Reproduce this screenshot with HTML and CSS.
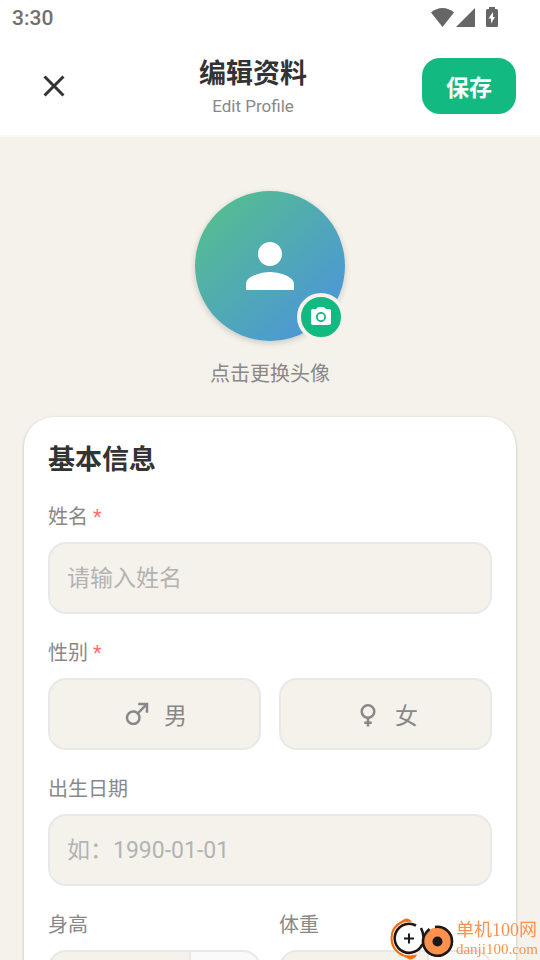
FILE: index.html
```html
<!DOCTYPE html>
<html lang="zh-CN">
<head>
<meta charset="utf-8">
<meta name="viewport" content="width=device-width, initial-scale=1">
<title>编辑资料</title>
<link rel="stylesheet" href="styles.css">
</head>
<body>
<div class="app">
  <div class="status">
    <span class="status-time">3:30</span>
    <svg class="status-icons" width="70" height="24" viewBox="0 0 70 24" fill="#666" aria-hidden="true">
      <path d="M12.500 23 1 8.500C7.500 2.500 17.500 2.500 24 8.500Z"/>
      <path d="M26 23 45 4V23Z"/>
      <path fill-rule="evenodd" d="M59 3h6v2h1.500q1.500 0 1.500 1.500v15q0 1.500-1.500 1.500h-9q-1.500 0-1.500-1.500v-15q0-1.500 1.500-1.500h1.500ZM63 8l-4.500 6.500h2.500v5l4-6.500h-2Z"/>
    </svg>
  </div>

  <header class="header">
    <button class="close" type="button" aria-label="关闭">
      <svg width="36" height="36" viewBox="0 0 24 24" fill="#333" aria-hidden="true"><path d="M19 6.410 17.590 5 12 10.590 6.410 5 5 6.410 10.590 12 5 17.590 6.410 19 12 13.410 17.590 19 19 17.590 13.410 12z"/></svg>
    </button>
    <div class="heading">
      <h1 class="heading-title">编辑资料</h1>
      <p class="heading-sub">Edit Profile</p>
    </div>
    <button class="save" type="submit" form="profile">保存</button>
  </header>

  <main class="content">
    <section class="avatar-section">
      <button class="avatar" type="button" aria-label="更换头像">
        <svg width="72" height="72" viewBox="0 0 24 24" fill="#fff" aria-hidden="true"><path d="M12 12c2.210 0 4-1.790 4-4s-1.790-4-4-4-4 1.790-4 4 1.790 4 4 4zm0 2c-2.670 0-8 1.340-8 4v2h16v-2c0-2.660-5.330-4-8-4z"/></svg>
        <span class="avatar-badge">
          <svg width="24" height="24" viewBox="0 0 24 24" fill="#fff" aria-hidden="true"><circle cx="12" cy="12" r="3.200"/><path d="M9 2 7.170 4H4c-1.100 0-2 .9-2 2v12c0 1.100.9 2 2 2h16c1.100 0 2-.9 2-2V6c0-1.100-.9-2-2-2h-3.170L15 2H9zm3 15c-2.760 0-5-2.240-5-5s2.240-5 5-5 5 2.240 5 5-2.240 5-5 5z"/></svg>
        </span>
      </button>
      <p class="avatar-hint">点击更换头像</p>
    </section>

    <form class="card" id="profile">
      <h2 class="card-title">基本信息</h2>

      <div class="field">
        <label class="label" for="name">姓名 <span class="required">*</span></label>
        <input class="input" id="name" type="text" placeholder="请输入姓名">
      </div>

      <div class="field" role="radiogroup" aria-labelledby="gender-label">
        <span class="label" id="gender-label">性别 <span class="required">*</span></span>
        <div class="row">
          <label class="choice">
            <input class="choice-input" type="radio" name="gender" value="male">
            <svg width="30" height="30" viewBox="0 0 24 24" fill="currentColor" aria-hidden="true"><path d="M9 9C10.290 9 11.500 9.410 12.470 10.110L17.580 5H13V3H21V11H19V6.410L13.890 11.500C14.590 12.500 15 13.700 15 15A6 6 0 0 1 9 21A6 6 0 0 1 3 15A6 6 0 0 1 9 9M9 11A4 4 0 0 0 5 15A4 4 0 0 0 9 19A4 4 0 0 0 13 15A4 4 0 0 0 9 11Z"/></svg>
            <span>男</span>
          </label>
          <label class="choice">
            <input class="choice-input" type="radio" name="gender" value="female">
            <svg width="30" height="30" viewBox="0 0 24 24" fill="currentColor" aria-hidden="true"><path d="M12 4A6 6 0 0 1 18 10C18 12.970 15.840 15.440 13 15.920V18H15V20H13V22H11V20H9V18H11V15.920C8.160 15.440 6 12.970 6 10A6 6 0 0 1 12 4M12 6A4 4 0 0 0 8 10A4 4 0 0 0 12 14A4 4 0 0 0 16 10A4 4 0 0 0 12 6Z"/></svg>
            <span>女</span>
          </label>
        </div>
      </div>

      <div class="field">
        <label class="label" for="birth">出生日期</label>
        <input class="input" id="birth" type="text" placeholder="如：1990-01-01">
      </div>

      <div class="row">
        <div class="field">
          <label class="label" for="height">身高</label>
          <div class="measure">
            <input class="measure-input" id="height" type="text" inputmode="decimal">
            <span class="measure-unit"></span>
          </div>
        </div>
        <div class="field">
          <label class="label" for="weight">体重</label>
          <div class="measure">
            <input class="measure-input" id="weight" type="text" inputmode="decimal">
            <span class="measure-unit measure-unit-narrow"></span>
          </div>
        </div>
      </div>
    </form>
  </main>

  <div class="watermark">
    <svg width="64" height="42" viewBox="0 0 64 42" fill="none" aria-hidden="true">
      <circle cx="19" cy="20.500" r="15" fill="#fff"/>
      <path d="M13 3.500C5 7 1.500 13 1.500 20c0 8 4 14 12 17.500" stroke="#ff6a0a" stroke-width="2"/>
      <path d="M7 7Q11 2 16 .5Q20 .5 22 4Q14 3 7 7Z" fill="#ff6a0a"/>
      <path d="M10 36Q18 38.500 27 36.500Q25 41 20 41.500Q15 40 10 36Z" fill="#ff6a0a"/>
      <path d="M26 7.500A14.500 14.500 0 1 0 32.500 26" stroke="#1d1718" stroke-width="2.600"/>
      <path d="M31 10Q33 14 33.500 19" stroke="#1d1718" stroke-width="2.600"/>
      <path d="M19 15.500v10M14 20.500h10" stroke="#1d1718" stroke-width="2"/>
      <circle cx="47.500" cy="23.500" r="14" fill="#ff914d"/>
      <path d="M45 9A14.500 14.500 0 1 1 34 18Q36 14 39.500 11" stroke="#1d1718" stroke-width="2.600"/>
      <circle cx="47.500" cy="23.500" r="5" fill="#1d1718"/>
    </svg>
    <div class="watermark-text">
      <span class="watermark-name">单机100网</span>
      <span class="watermark-site">danji100.com</span>
    </div>
  </div>
</div>
</body>
</html>
```
FILE: styles.css
```css
* {
  box-sizing: border-box;
}

body,
h1,
h2,
p {
  margin: 0;
}

body {
  background: #f5f2eb;
  color: #333;
  font-family: Roboto, "Noto Sans CJK SC", sans-serif;
}

button,
input {
  font-family: inherit;
}

button {
  border: 0;
  padding: 0;
  cursor: pointer;
}

.app {
  display: flex;
  flex-direction: column;
  height: 100vh;
  overflow: hidden;
}

.status {
  display: flex;
  flex: none;
  align-items: center;
  justify-content: space-between;
  height: 36px;
  padding: 0 40px 0 12px;
  background: #fff;
}

.status-time {
  color: #707070;
  font-size: 21px;
  font-weight: 500;
  line-height: 38px;
}

.status-icons {
  margin-bottom: 4px;
}

.header {
  display: flex;
  flex: none;
  align-items: center;
  justify-content: space-between;
  padding: 18px 24px 17px;
  border-bottom: 2px solid #f8f9fa;
  background: #fff;
}

.close {
  display: flex;
  align-items: center;
  justify-content: center;
  width: 60px;
  height: 60px;
  background: none;
}

.heading {
  flex: 1;
  text-align: center;
}

.heading-title {
  font-size: 27px;
  font-weight: 700;
  line-height: 40px;
}

.heading-sub {
  color: #888;
  font-size: 17px;
  line-height: 24px;
}

.save {
  height: 56px;
  padding: 0 24px;
  border-radius: 18px;
  background: #12b981;
  color: #fff;
  font-size: 23px;
  font-weight: 700;
}

.content {
  flex: 1;
  min-height: 0;
  padding: 0 24px;
  overflow-y: auto;
  scrollbar-width: none;
}

.avatar-section {
  display: flex;
  flex-direction: column;
  align-items: center;
  gap: 18px;
  padding: 54px 0 28px;
}

.avatar {
  display: flex;
  position: relative;
  align-items: center;
  justify-content: center;
  width: 150px;
  height: 150px;
  border-radius: 50%;
  background: linear-gradient(135deg, #56c288, #4a90e2);
  box-shadow: 0 2px 6px rgba(0, 0, 0, 0.18);
}

.avatar-badge {
  display: flex;
  position: absolute;
  right: 0;
  bottom: 0;
  align-items: center;
  justify-content: center;
  width: 48px;
  height: 48px;
  border: 4px solid #f5f2eb;
  border-radius: 50%;
  background: #12b981;
}

.avatar-hint {
  color: #888;
  font-size: 20px;
  line-height: 30px;
}

.card {
  display: flex;
  flex-direction: column;
  gap: 24px;
  padding: 26px 24px 24px;
  border-radius: 30px;
  background: #fff;
  box-shadow: 0 1px 3px rgba(0, 0, 0, 0.25);
}

.card-title {
  font-size: 27px;
  font-weight: 700;
  line-height: 35px;
}

.field {
  display: flex;
  flex: 1;
  flex-direction: column;
  gap: 10px;
  min-width: 0;
}

.label {
  color: #888;
  font-size: 20px;
  line-height: 30px;
}

.required {
  color: #ff6b6b;
}

.input,
.choice,
.measure {
  height: 72px;
  border: 2px solid #e8e8e8;
  border-radius: 18px;
  background: #f5f2eb;
}

.input {
  width: 100%;
  padding: 0 17px;
  color: #333;
  font-size: 23px;
}

.input::placeholder {
  color: #b3b3b3;
}

.row {
  display: flex;
  gap: 18px;
}

.choice {
  display: flex;
  position: relative;
  flex: 1;
  align-items: center;
  justify-content: center;
  gap: 12px;
  color: #888;
  font-size: 23px;
  cursor: pointer;
}

.choice-input {
  position: absolute;
  opacity: 0;
}

.choice:has(:checked) {
  border-color: #12b981;
  color: #12b981;
}

.measure {
  display: flex;
  overflow: hidden;
}

.measure-input {
  flex: 1;
  min-width: 0;
  border: 0;
  padding: 0 17px;
  background: none;
  font-size: 23px;
}

.measure-unit {
  flex: none;
  width: 70px;
  border-left: 2px solid #e8e8e8;
  background: #fafafa;
}

.measure-unit-narrow {
  width: 63px;
}

.watermark {
  display: flex;
  position: fixed;
  right: 2px;
  bottom: 0;
  align-items: center;
  gap: 2px;
}

.watermark-text {
  display: flex;
  flex-direction: column;
  color: #ff914d;
  font-family: "Liberation Serif", "Noto Sans CJK SC", serif;
}

.watermark-name {
  font-size: 18px;
  line-height: 20px;
}

.watermark-site {
  font-size: 15px;
  line-height: 18px;
}
```
